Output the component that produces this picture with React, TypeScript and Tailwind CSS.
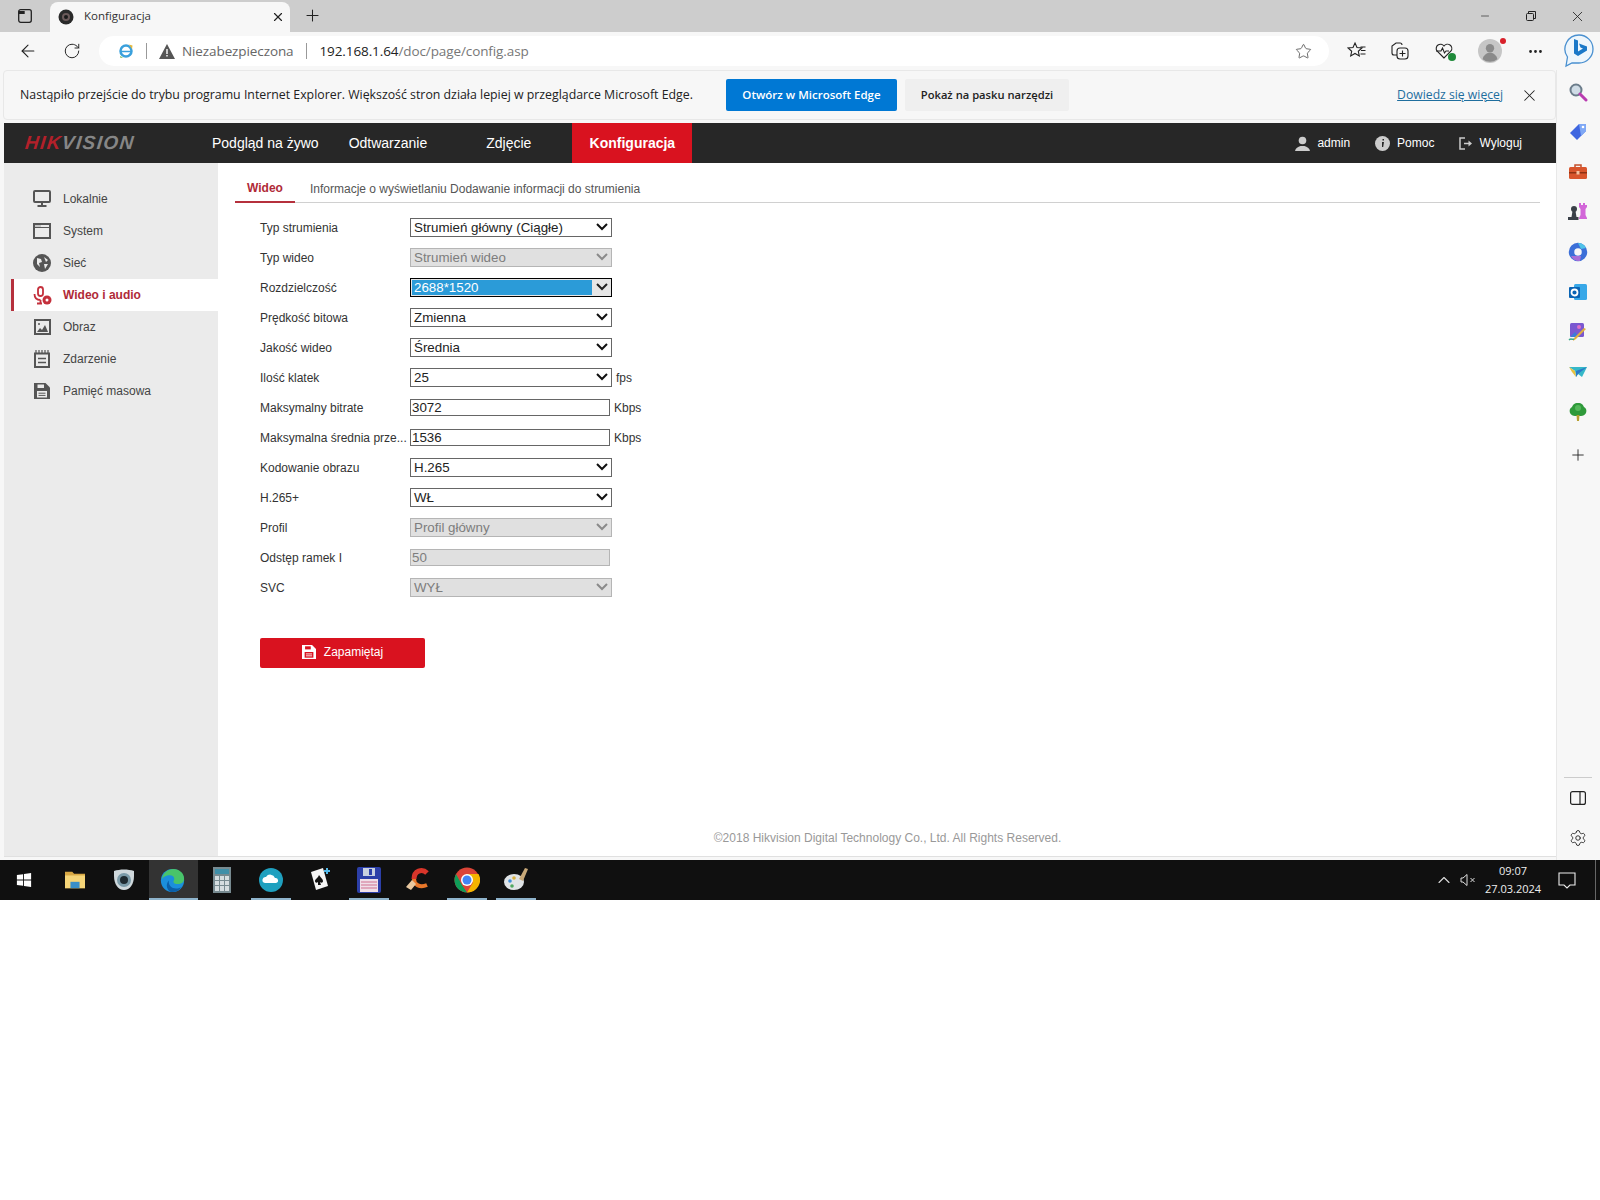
import React from 'react';
import {
  ArrowLeft, RotateCw, Star, X, Plus, Minus, MoreHorizontal, Settings, ChevronUp,
} from 'lucide-react';

const UI = 'font-["Open_Sans",sans-serif]';
const ARIAL = 'font-["Liberation_Sans",Arial,sans-serif]';

type Field = {
  label: string;
  kind: 'select' | 'input';
  value: string;
  disabled?: boolean;
  focused?: boolean;
  unit?: string;
};

const FIELDS: Field[] = [
  { label: 'Typ strumienia', kind: 'select', value: 'Strumień główny (Ciągłe)' },
  { label: 'Typ wideo', kind: 'select', value: 'Strumień wideo', disabled: true },
  { label: 'Rozdzielczość', kind: 'select', value: '2688*1520', focused: true },
  { label: 'Prędkość bitowa', kind: 'select', value: 'Zmienna' },
  { label: 'Jakość wideo', kind: 'select', value: 'Średnia' },
  { label: 'Ilość klatek', kind: 'select', value: '25', unit: 'fps' },
  { label: 'Maksymalny bitrate', kind: 'input', value: '3072', unit: 'Kbps' },
  { label: 'Maksymalna średnia prze...', kind: 'input', value: '1536', unit: 'Kbps' },
  { label: 'Kodowanie obrazu', kind: 'select', value: 'H.265' },
  { label: 'H.265+', kind: 'select', value: 'WŁ' },
  { label: 'Profil', kind: 'select', value: 'Profil główny', disabled: true },
  { label: 'Odstęp ramek I', kind: 'input', value: '50', disabled: true },
  { label: 'SVC', kind: 'select', value: 'WYŁ', disabled: true },
];

const Chevron = ({ color }: { color: string }) => (
  <svg width="12" height="8" viewBox="0 0 12 8" fill="none" stroke={color} strokeWidth="2">
    <path d="M1 1l5 5 5-5" />
  </svg>
);

const SelectBox = ({ field }: { field: Field }) => {
  if (field.focused) {
    return (
      <div className="mb-[2px] flex h-[19px] w-[202px] items-center border border-black bg-[#e6e6e6] p-px">
        <span className="flex h-full w-[180px] items-center bg-[#2b9bd8] pl-[2px] pt-[1px] text-[13.33px] text-white">{field.value}</span>
        <span className="flex flex-1 justify-center pl-[1px]"><Chevron color="#222" /></span>
      </div>
    );
  }
  return (
    <div
      className={`mb-[2px] flex h-[19px] w-[202px] items-center justify-between border pl-[3px] pr-[3px] text-[13.33px] ${
        field.disabled ? 'border-[#b5b5b5] bg-[#e0e0e0] text-[#7d7d7d]' : 'border-[#666] bg-white text-[#222]'
      }`}
    >
      <span className="pt-[1px]">{field.value}</span>
      <Chevron color={field.disabled ? '#8a8a8a' : '#111'} />
    </div>
  );
};

const FormRow = ({ field }: { field: Field }) => (
  <div className="flex h-[30px] items-center">
    <label className="w-[150px] whitespace-nowrap text-[12px] text-[#333]">{field.label}</label>
    {field.kind === 'select' ? (
      <SelectBox field={field} />
    ) : (
      <input
        readOnly
        value={field.value}
        className={`mb-[2px] h-[17px] w-[200px] border px-[1px] pt-[1px] text-[13.33px] outline-none ${
          field.disabled ? 'border-[#b5b5b5] bg-[#e0e0e0] text-[#7d7d7d]' : 'border-[#666] bg-white text-[#222]'
        }`}
      />
    )}
    {field.unit && <span className="ml-[4px] text-[12px] text-[#333]">{field.unit}</span>}
  </div>
);

const IconMonitor = () => (
  <svg width="18" height="18" viewBox="0 0 18 18" fill="none" stroke="#555" strokeWidth="2">
    <rect x="1" y="1" width="16" height="11" rx="1" />
    <path d="M9 12.500v3M4.500 16h9" />
  </svg>
);
const IconWindow = () => (
  <svg width="18" height="18" viewBox="0 0 18 18" fill="none" stroke="#555" strokeWidth="2">
    <rect x="1" y="2" width="16" height="14" />
    <path d="M1 5.500h16" strokeWidth="1" />
    <path d="M2.500 4h6" stroke="#555" strokeWidth="1" strokeDasharray="1 1" />
  </svg>
);
const IconGlobe = () => (
  <svg width="18" height="18" viewBox="0 0 18 18">
    <circle cx="9" cy="9" r="9" fill="#555" />
    <path d="M4 4l4 1 1 3-3 1 1 4-3-3zM11 3l4 3-2 2zM11 10h4l-3 5z" fill="#ebebeb" />
  </svg>
);
const IconMic = () => (
  <svg width="19" height="19" viewBox="0 0 19 19" fill="none" stroke="#c4303c" strokeWidth="1.800">
    <rect x="5" y="1" width="5" height="9" rx="2.500" />
    <path d="M1.500 8c0 4 2 6 6 6M7.500 14v2.500M4 17.500h5" />
    <circle cx="14" cy="14" r="4.500" fill="#c4303c" stroke="none" />
    <circle cx="14" cy="14" r="1.500" fill="#fff" stroke="none" />
  </svg>
);
const IconImage = () => (
  <svg width="17" height="16" viewBox="0 0 17 16">
    <rect x="1" y="1" width="15" height="14" fill="none" stroke="#555" strokeWidth="2" />
    <path d="M3 13l3-4 2 2 3-5 3 7z" fill="#555" />
    <circle cx="5" cy="5" r="1" fill="#555" />
  </svg>
);
const IconCalendar = () => (
  <svg width="16" height="18" viewBox="0 0 16 18" fill="none" stroke="#555" strokeWidth="2">
    <rect x="1" y="3.500" width="14" height="13.500" />
    <path d="M2 0v3M5 0v3M8 0v3M11 0v3M14 0v3" strokeWidth="1.200" />
    <path d="M4 8.500h8M4 12.500h8" strokeWidth="1.400" />
  </svg>
);
const IconDisk = ({ color = '#555', hole = '#ebebeb', size = 16 }: { color?: string; hole?: string; size?: number }) => (
  <svg width={size} height={size} viewBox="0 0 16 16">
    <path d="M0 0h11.500L16 4.500V16H0z" fill={color} />
    <rect x="3.500" y="1.500" width="6.500" height="3.500" fill={hole} />
    <rect x="3" y="8" width="10" height="6.500" fill={hole} />
    <path d="M4.500 10.200h7M4.500 12.400h7" stroke={color} strokeWidth="1" />
  </svg>
);

const SIDE_ITEMS = [
  { name: 'Lokalnie', icon: <IconMonitor /> },
  { name: 'System', icon: <IconWindow /> },
  { name: 'Sieć', icon: <IconGlobe /> },
  { name: 'Wideo i audio', icon: <IconMic />, active: true },
  { name: 'Obraz', icon: <IconImage /> },
  { name: 'Zdarzenie', icon: <IconCalendar /> },
  { name: 'Pamięć masowa', icon: <IconDisk /> },
];

const EdgeIcon = ({ size = 28 }: { size?: number }) => (
  <svg width={size} height={size} viewBox="0 0 28 28">
    <circle cx="14" cy="14" r="13" fill="#1b8fdc" />
    <path d="M2 13C3 5 9 1 15 1c7 0 12 5 12 11 0 4-3 6-7 6-3 0-5-1-5-3 0-1 1-1 1-3 0-2-2-4-5-4-4 0-8 2-9 5z" fill="#49c46a" />
    <path d="M10 14c-1 5 3 9 8 9 3 0 5-1 6-2-2 4-6 6-10 6-3 0-5-2-6-5-1-3 0-6 2-8z" fill="#0c5fa8" />
  </svg>
);

const IeIcon = () => (
  <svg width="16" height="16" viewBox="0 0 16 16">
    <circle cx="8" cy="8" r="5.500" fill="none" stroke="#3aa0dc" strokeWidth="2.500" />
    <path d="M3 8.500h10" stroke="#3aa0dc" strokeWidth="1.500" />
    <path d="M11 1.500l3.500 1L14 6z" fill="#e8b93a" />
    <path d="M2 13l3 1.500L2.500 15z" fill="#7cbf5a" />
  </svg>
);

const SideBarIcons = () => (
  <>
    <svg width="20" height="20" viewBox="0 0 20 20"><circle cx="8" cy="8" r="5.500" fill="#cfdce6" stroke="#6b7c8a" strokeWidth="2" /><path d="M12 12l6 6" stroke="#b93cb0" strokeWidth="3" strokeLinecap="round" /></svg>
    <svg width="20" height="20" viewBox="0 0 20 20"><path d="M11 2h7v7l-9 9-7-7z" fill="#3f66e0" /><path d="M11 2h7v7L13 14z" fill="#7fa8f5" /><circle cx="15" cy="5" r="1.300" fill="#fff" /></svg>
    <svg width="20" height="20" viewBox="0 0 20 20"><path d="M7 5V3h6v2" fill="none" stroke="#c4502c" strokeWidth="1.500" /><rect x="1" y="5" width="18" height="12" rx="1.500" fill="#d8552c" /><rect x="1" y="10" width="18" height="1.500" fill="#8f3213" /><rect x="8.500" y="9" width="3" height="3.500" fill="#f4c0a0" /></svg>
    <svg width="20" height="20" viewBox="0 0 20 20"><path d="M11 1h2v2h2V1h2v2h2v2l-1.500 2v6l1.500 3v1h-8v-1l1.500-3V7L11 5z" fill="#d266d8" /><circle cx="6" cy="7" r="3" fill="#3a4048" /><path d="M4.500 9h3l1 6h2v3H0v-3h3.500z" fill="#3a4048" /></svg>
    <svg width="20" height="20" viewBox="0 0 20 20"><circle cx="10" cy="10" r="6.500" fill="none" stroke="#3c6fd8" strokeWidth="5.500" /><path d="M10 1a9 9 0 0 1 8 5l-5 1z" fill="#4fc3e8" /><path d="M3 14a9 9 0 0 0 9 5l1-5z" fill="#a86fd8" /></svg>
    <svg width="20" height="20" viewBox="0 0 20 20"><rect x="6" y="2" width="13" height="16" rx="1.500" fill="#38a8e8" /><rect x="1" y="5" width="11" height="11" rx="1" fill="#0a64b4" /><circle cx="6.500" cy="10.500" r="3" fill="none" stroke="#fff" strokeWidth="1.800" /></svg>
    <svg width="20" height="20" viewBox="0 0 20 20"><rect x="2" y="1" width="14" height="14" rx="1.500" fill="#7a58d0" /><circle cx="11" cy="5" r="2" fill="#e070c8" /><path d="M2 15l5-5 4 5z" fill="#3d7bd8" /><path d="M18 7L8 17l-3 2 1-3L16 6z" fill="#e0b040" /><path d="M1 18c2-2 3 0 5-1" stroke="#3aa88a" strokeWidth="1.500" fill="none" /></svg>
    <svg width="20" height="20" viewBox="0 0 20 20"><path d="M1 5h18l-5 10-4-3-2 3-1-6z" fill="#36b8c8" /><path d="M8 9l11-4-9 7-2 3z" fill="#2b78c8" /><path d="M1 5l6 4 1 6-4-5z" fill="#e8c040" /></svg>
    <svg width="20" height="20" viewBox="0 0 20 20"><path d="M10 1c4 0 5 2 6 4 2 1 3 3 2 6-1 2-3 3-5 3H7c-2 0-4-1-5-3-1-3 0-5 2-6 1-2 2-4 6-4z" fill="#2f9a3a" /><circle cx="10" cy="6" r="3" fill="#55b85a" /><path d="M8.500 13h3l-.5 6H9z" fill="#b8a030" /></svg>
  </>
);

const TaskbarIcons = () => {
  const items = [
    { x: 'win', node: <svg width="16" height="16" viewBox="0 0 18 18" fill="#fff"><path d="M1 3.500l7-1v6H1zM9 2.300l8-1.200v7.400H9zM1 9.500h7v6l-7-1zM9 9.500h8v7.400l-8-1.200z" /></svg> },
    { x: 'files', node: <svg width="22" height="20" viewBox="0 0 24 22"><path d="M1 2h8l2 2h12v16H1z" fill="#d8a844" /><path d="M1 6h22v14H1z" fill="#f5d578" /><rect x="7" y="13" width="10" height="7" fill="#3a8fc8" /></svg> },
    { x: 'cam', node: <svg width="24" height="24" viewBox="0 0 24 24"><path d="M2 3c6-2 14-2 20 0v5c0 8-4 14-10 14S2 16 2 8z" fill="#cfd8dc" /><circle cx="12" cy="12" r="7" fill="#7a9aa8" /><circle cx="12" cy="12" r="4" fill="#1e2a30" /></svg> },
    { x: 'edge', active: true, node: <EdgeIcon size={25} /> },
    { x: 'calc', node: <svg width="18" height="26" viewBox="0 0 18 26"><rect width="18" height="26" fill="#778a90" /><rect x="2" y="2" width="14" height="5" fill="#3f8fa8" /><path d="M2 9h4v4H2zM7 9h4v4H7zM12 9h4v4h-4zM2 14h4v4H2zM7 14h4v4H7zM12 14h4v4h-4zM2 19h4v5H2zM7 19h4v5H7zM12 19h4v5h-4z" fill="#d5dde0" /></svg> },
    { x: 'cloud', underline: true, node: <svg width="24" height="24" viewBox="0 0 24 24"><circle cx="12" cy="12" r="12" fill="#1fa0bf" /><path d="M6 15a3 3 0 0 1 1-6 5 5 0 0 1 9 1 2.500 2.500 0 0 1 1 5z" fill="#fff" /></svg> },
    { x: 'cards', node: <svg width="24" height="26" viewBox="0 0 24 26"><path d="M3 5l12-4 5 18-12 4z" fill="#f5f5f5" /><path d="M11 8c2 3 4 4 4 6s-2 2-3 1l1 3h-3v-3c-1 1-3 1-3-1s3-3 4-6z" fill="#111" /><path d="M19 1v6M16 4h6" stroke="#52b8e8" strokeWidth="2" /></svg> },
    { x: 'save', underline: true, node: <svg width="24" height="26" viewBox="0 0 24 26"><rect width="24" height="26" rx="2" fill="#2c3fa8" /><rect x="6" y="1" width="12" height="8" fill="#c8d0e0" /><rect x="12" y="2" width="3" height="6" fill="#2c3fa8" /><rect x="3" y="12" width="18" height="13" fill="#f0e0e8" /><path d="M4 15h16M4 18h16M4 21h16" stroke="#d07090" /></svg> },
    { x: 'ccleaner', node: <svg width="26" height="26" viewBox="0 0 26 26" fill="none"><path d="M22 6c-5-5-13-2-13 6" stroke="#d8352a" strokeWidth="5" /><path d="M9 12c0 6 6 9 13 6" stroke="#e8772a" strokeWidth="4" /><path d="M1 20l6-7 4 4-5 6z" fill="#e8c8a0" /></svg> },
    { x: 'chrome', underline: true, node: <svg width="26" height="26" viewBox="0 0 26 26"><circle cx="13" cy="13" r="12.500" fill="#db4437" /><path d="M2 7l6 11 5 7.500A12.500 12.500 0 0 1 2 7z" fill="#0f9d58" /><path d="M13 7h11.500a12.500 12.500 0 0 1-11.500 18.500l6-10z" fill="#f4b400" /><circle cx="13" cy="13" r="6" fill="#fff" /><circle cx="13" cy="13" r="4.500" fill="#4285f4" /></svg> },
    { x: 'paint', underline: true, node: <svg width="26" height="26" viewBox="0 0 26 26"><ellipse cx="11" cy="15" rx="10" ry="8" fill="#e0e4e6" /><circle cx="7" cy="14" r="1.800" fill="#3f8fd8" /><circle cx="11" cy="11" r="1.800" fill="#d8b040" /><circle cx="9" cy="19" r="1.800" fill="#50a860" /><path d="M16 12l6-11 3 1-5 12z" fill="#c8a878" /></svg> },
  ];
  return (
    <div className="flex h-full pl-[2px]">
      {items.map(it => (
        <div
          key={it.x}
          className={`relative flex h-full w-[49px] items-center justify-center ${it.active ? 'bg-[#333]' : ''} ${it.x === 'win' ? 'pr-[5px]' : 'pr-[2px]'}`}
        >
          {it.node}
          {it.active && <span className="absolute bottom-0 left-0 h-[2px] w-full bg-[#8fb4cc]" />}
          {it.underline && <span className="absolute bottom-0 left-[4px] h-[2px] w-[40px] bg-[#8fb4cc]" />}
        </div>
      ))}
    </div>
  );
};

export default function App() {
  return (
    <div className={`flex h-[1200px] w-[1600px] flex-col overflow-hidden bg-white ${ARIAL}`}>
      {/* Edge tab strip */}
      <div className={`flex h-[32px] items-end bg-[#cdcdcd] ${UI}`}>
        <div className="flex h-[32px] w-[50px] items-center justify-center">
          <svg width="14" height="14" viewBox="0 0 14 14" fill="none" stroke="#222" strokeWidth="1.300">
            <rect x=".7" y=".7" width="12.600" height="12.600" rx="2" />
            <path d="M.7 3.500h6" strokeWidth="3" />
          </svg>
        </div>
        <div className="flex h-[30px] w-[240px] items-center rounded-t-[8px] bg-[#f7f7f7] pl-[8px] pr-[5px] text-[11.500px] text-[#333]">
          <svg width="16" height="16" viewBox="0 0 16 16">
            <circle cx="8" cy="8" r="7.500" fill="#2a2a2a" />
            <circle cx="8" cy="8" r="4" fill="#6b5a5a" />
            <circle cx="8" cy="8" r="2" fill="#1a1a1a" />
          </svg>
          <span className="mb-[2px] ml-[10px]">Konfiguracja</span>
          <X size={14} className="ml-auto text-[#222]" />
        </div>
        <Plus size={19} strokeWidth={1.300} className="mb-[7px] ml-[13px] text-[#222]" />
        <div className="ml-auto flex h-[32px] items-center text-[#222]">
          <span className="flex w-[46px] justify-center"><Minus size={12} strokeWidth={1.300} /></span>
          <span className="flex w-[46px] justify-center">
            <svg width="10" height="10" viewBox="0 0 10 10" fill="none" stroke="#222"><rect x=".5" y="2.500" width="7" height="7" rx="1" /><path d="M2.500 2.500V.5h7v7H7.500" /></svg>
          </span>
          <span className="flex w-[46px] justify-center"><X size={17} strokeWidth={1.200} /></span>
        </div>
      </div>

      {/* Edge toolbar */}
      <div className={`flex h-[38px] items-center bg-[#f7f7f7] ${UI}`}>
        <ArrowLeft size={20} strokeWidth={1.300} className="ml-[18px] text-[#222]" />
        <RotateCw size={18} strokeWidth={1.300} className="ml-[25px] text-[#222]" />
        <div className="ml-[18px] flex h-[30px] w-[1230px] items-center rounded-[15px] bg-white pl-[19px] pr-[17px] text-[14px]">
          <IeIcon />
          <span className="ml-[12px] h-[16px] w-px bg-[#999]" />
          <svg width="16" height="15" viewBox="0 0 16 15" className="ml-[12px]">
            <path d="M8 0l8 15H0z" fill="#555" />
            <path d="M7.300 5h1.400v5H7.300zM7.300 11h1.400v1.500H7.300z" fill="#fff" />
          </svg>
          <span className="ml-[7px] text-[13.500px] tracking-[-0.1px] text-[#666]">Niezabezpieczona</span>
          <span className="ml-[12px] h-[16px] w-px bg-[#999]" />
          <span className="ml-[13px] text-[13.500px] tracking-[-0.1px] text-[#222]">192.168.1.64<span className="text-[#777]">/doc/page/config.asp</span></span>
          <Star size={17} strokeWidth={1.100} className="ml-auto text-[#444]" />
        </div>
        <div className="flex flex-1 items-center text-[#222]">
          <span className="flex w-[56px] justify-center">
            <svg width="20" height="20" viewBox="0 0 20 20" fill="none" stroke="#222" strokeWidth="1.100"><path d="M8 2l2 4.500 5 .5-3.700 3.300 1 4.700L8 12.500 3.700 15l1-4.700L1 7l5-.5z" /><path d="M13.500 6h5M14 9.500h4.500M13.500 13h5" /></svg>
          </span>
          <span className="-ml-[2px] flex w-[34px] justify-center">
            <svg width="20" height="20" viewBox="0 0 20 20" fill="none" stroke="#222" strokeWidth="1.100"><path d="M7 14H4a2 2 0 0 1-2-2V5l4-3h4a2 2 0 0 1 2 2" /><rect x="7" y="7" width="11" height="11" rx="3" /><path d="M12.500 9.500v6M9.500 12.500h6" /></svg>
          </span>
          <span className="relative flex w-[54px] justify-center">
            <svg width="20" height="20" viewBox="0 0 20 20" fill="none" stroke="#222" strokeWidth="1.100"><path d="M10 17L3 10a4.300 4.300 0 0 1 7-5 4.300 4.300 0 0 1 7 5z" /><path d="M2 10h5l1.500-3 2 5 1.500-2h3" /></svg>
            <span className="absolute bottom-[0px] right-[15px] h-[8px] w-[8px] rounded-full bg-[#1f8a3a]" />
          </span>
          <span className="relative flex w-[38px] justify-center">
            <svg width="24" height="24" viewBox="0 0 26 26"><circle cx="13" cy="13" r="13" fill="#c6c6c6" /><circle cx="13" cy="10" r="4.500" fill="#8a8a8a" /><path d="M5 22c1-5 5-7 8-7s7 2 8 7a13 13 0 0 1-16 0z" fill="#8a8a8a" /></svg>
            <span className="absolute right-[3px] top-[-1px] h-[6px] w-[6px] rounded-full bg-[#d8202a]" />
          </span>
          <MoreHorizontal size={17} className="ml-[18px] text-[#222]" />
          <svg width="32" height="36" viewBox="0 0 32 36" className="ml-[19px]">
            <path d="M16 2a14 14 0 0 1 0 28H9l-6 3 1.500-9A14 14 0 0 1 16 2z" fill="#eef6fc" stroke="#4a90d0" strokeWidth="1.300" />
            <path d="M11 6l4 1.500v11l5-3-2.500-1-1.500-4 8 3v4l-9 5.500-4-2.500z" fill="#1a78c8" />
          </svg>
        </div>
      </div>

      {/* browser body */}
      <div className="flex h-[790px] bg-[#f7f7f7]">
        <div className="flex w-[1556px] flex-col">
          <div className={`ml-[3px] flex h-[50px] flex-none items-center rounded-[4px] border border-[#e8e8e8] pl-[16px] pr-[16px] text-[12.330px] text-[#222] ${UI}`}>
            <span>Nastąpiło przejście do trybu programu Internet Explorer. Większość stron działa lepiej w przeglądarce Microsoft Edge.</span>
            <button className="ml-[33px] h-[32px] w-[171px] rounded-[2px] bg-[#0078d4] text-[11.500px] font-semibold text-white">Otwórz w Microsoft Edge</button>
            <button className="ml-[8px] h-[32px] w-[164px] rounded-[2px] bg-[#efefef] text-[11.200px] font-semibold text-[#222]">Pokaż na pasku narzędzi</button>
            <a className="ml-auto text-[12.200px] text-[#1f6e9e] underline">Dowiedz się więcej</a>
            <X size={19} strokeWidth={1.300} className="ml-[17px] text-[#222]" />
          </div>

          <div className="ml-[4px] mt-[3px] flex min-h-0 flex-1 flex-col border-b border-[#e0e0e0]">
            {/* camera top nav */}
            <div className="flex h-[40px] flex-none items-center bg-[#272727] text-white">
              <span className="ml-[21px] w-[187px] -skew-x-6 text-[19px] font-bold italic tracking-[1.400px]">
                <span className="text-[#b3202a]">HIK</span><span className="text-[#868686]">VISION</span>
              </span>
              <span className="text-[14px]">Podgląd na żywo</span>
              <span className="ml-[30px] text-[14px]">Odtwarzanie</span>
              <span className="ml-[59px] text-[14px]">Zdjęcie</span>
              <span className="ml-[41px] flex h-full w-[120px] items-center justify-center bg-[#d9121f] text-[14px] font-bold">Konfiguracja</span>
              <div className="ml-auto flex items-center pr-[34px] text-[12px]">
                <svg width="15" height="15" viewBox="0 0 15 15" fill="#ccc"><circle cx="7.500" cy="4.500" r="3.800" /><path d="M0 15c.5-3 3-4 5.500-5h4c2.500 1 5 2 5.500 5z" /></svg>
                <span className="ml-[7px]">admin</span>
                <svg width="15" height="15" viewBox="0 0 15 15" className="ml-[25px]"><circle cx="7.500" cy="7.500" r="7.500" fill="#ccc" /><path d="M7 6h2l-.8 5H7zM7.500 3h1.500v1.500H7.500z" fill="#272727" /></svg>
                <span className="ml-[7px]">Pomoc</span>
                <svg width="14" height="13" viewBox="0 0 14 13" fill="none" stroke="#ccc" strokeWidth="1.500" className="ml-[25px]"><path d="M6 1H1v11h5" /><path d="M5 6.500h5" /><path d="M9.500 3.500l3.500 3-3.500 3z" fill="#ccc" stroke="none" /></svg>
                <span className="ml-[6px]">Wyloguj</span>
              </div>
            </div>

            <div className="flex min-h-0 flex-1">
              {/* left menu */}
              <div className="w-[214px] flex-none bg-[#ebebeb] pt-[20px]">
                {SIDE_ITEMS.map(item => (
                  <div
                    key={item.name}
                    className={`ml-[7px] flex h-[32px] items-center border-l-[3px] pl-[18px] text-[12px] ${
                      item.active ? 'border-[#b5303c] bg-white font-bold text-[#b02a37]' : 'border-transparent text-[#444]'
                    }`}
                  >
                    <span className="flex w-[20px] justify-center">{item.icon}</span>
                    <span className="ml-[11px]">{item.name}</span>
                  </div>
                ))}
              </div>

              {/* config page */}
              <div className="flex min-w-0 flex-1 flex-col bg-white pl-[17px] pr-[16px] pt-[10px]">
                <div className="flex h-[30px] items-start border-b border-[#d0d0d0] text-[12px]">
                  <span className="h-[30px] w-[60px] border-b-[2px] border-[#b5303c] pt-[6px] text-center font-bold text-[#b02a37]">Wideo</span>
                  <span className="ml-[15px] pt-[7px] text-[#555]">Informacje o wyświetlaniu Dodawanie informacji do strumienia</span>
                </div>
                <div className="ml-[25px] mt-[10px]">
                  {FIELDS.map(field => <FormRow key={field.label} field={field} />)}
                  <button className="mt-[35px] flex h-[30px] w-[165px] items-center justify-center rounded-[2px] bg-[#d9121f] pb-[2px] text-[12px] text-white">
                    <IconDisk color="#fff" hole="#d9121f" size={14} />
                    <span className="ml-[8px]">Zapamiętaj</span>
                  </button>
                </div>
                <div className="mt-auto pb-[9px] text-center text-[12px] text-[#999]">©2018 Hikvision Digital Technology Co., Ltd. All Rights Reserved.</div>
              </div>
            </div>
          </div>
          <div className="h-[3px] flex-none" />
        </div>

        {/* Edge sidebar */}
        <div className="flex w-[44px] flex-col items-center border-l border-[#e8e8e8] pr-[2px] pt-[12px]">
          <div className="flex flex-col items-center gap-[20px]">
            <SideBarIcons />
            <Plus size={18} strokeWidth={1.200} className="mt-[4px] text-[#222]" />
          </div>
          <div className="mt-auto h-px w-[28px] bg-[#ccc]" />
          <svg width="16" height="14" viewBox="0 0 16 14" fill="none" stroke="#222" strokeWidth="1.200" className="mt-[13px]"><rect x=".6" y=".6" width="14.800" height="12.800" rx="2" /><path d="M10 .6v12.800" /></svg>
          <Settings size={18} strokeWidth={1.200} className="mb-[13px] mt-[24px] text-[#222]" />
        </div>
      </div>

      {/* Windows taskbar */}
      <div className={`flex h-[40px] flex-none items-center bg-[#101010] text-white ${UI}`}>
        <TaskbarIcons />
        <div className="ml-auto flex h-full items-center">
          <ChevronUp size={20} strokeWidth={1.300} className="text-[#ddd]" />
          <svg width="16" height="14" viewBox="0 0 16 14" fill="none" stroke="#ddd" className="ml-[6px]"><path d="M1 5h2l4-3.500v11L3 9H1z" /><path d="M10.500 5l4 4M14.500 5l-4 4" /></svg>
          <div className="ml-[4px] flex w-[66px] flex-col items-center text-[11px] leading-[18px] text-[#eee]">
            <span>09:07</span>
            <span>27.03.2024</span>
          </div>
          <svg width="18" height="17" viewBox="0 0 18 17" fill="none" stroke="#eee" strokeWidth="1.100" className="ml-[12px]"><path d="M1 1h16v12h-5l-3 3-3-3H1z" /></svg>
          <div className="ml-[19px] mr-[4px] h-full w-px bg-[#666]" />
        </div>
      </div>
      <div className="flex-1 bg-white" />
    </div>
  );
}
